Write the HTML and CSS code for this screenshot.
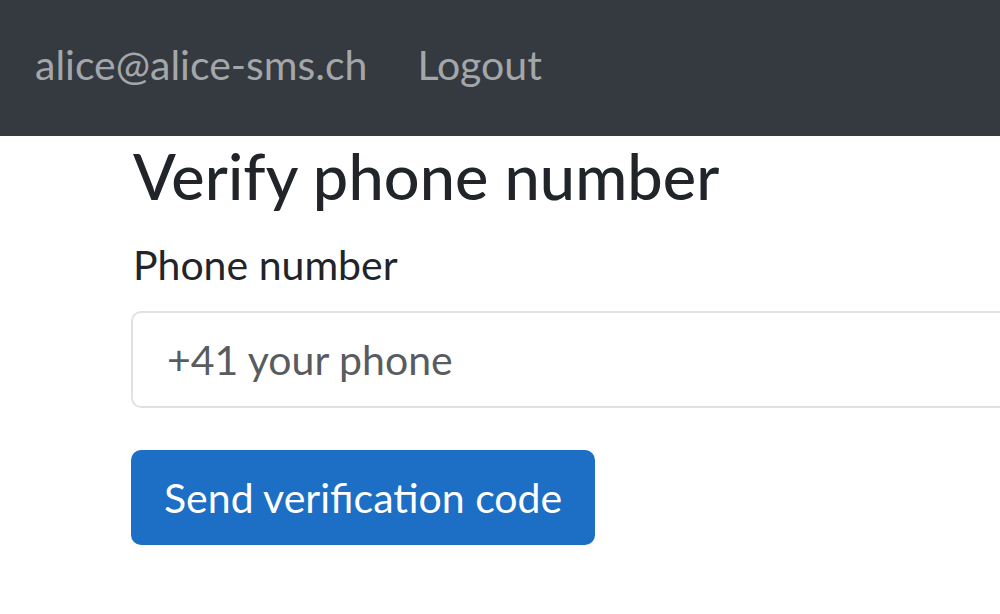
FILE: index.html
```html
<!DOCTYPE html>
<html lang="en">
<head>
<meta charset="utf-8">
<title>Verify phone number</title>
<link rel="stylesheet" href="styles.css">
</head>
<body>
<nav class="navbar">
  <a class="nav-link" href="#">alice@alice-sms.ch</a>
  <a class="nav-link" href="#">Logout</a>
</nav>
<main class="container">
  <h1 class="title">Verify phone number</h1>
  <form class="form">
    <label class="label" for="phone">Phone number</label>
    <input class="input" id="phone" type="text" placeholder="+41 your phone">
    <button class="btn" type="button">Send verification code</button>
  </form>
</main>
</body>
</html>
```

FILE: styles.css
```css
html, body {
  margin: 0;
  padding: 0;
  background: #ffffff;
  font-family: Lato, "Noto Sans", sans-serif;
  color: #212529;
}
.navbar {
  box-sizing: border-box;
  display: flex;
  align-items: center;
  height: 136px;
  background: #343a40;
  padding: 0 0 8px 10px;
}
.nav-link {
  color: #a4a7aa;
  text-decoration: none;
  font-size: 41px;
  padding: 0 25px;
  line-height: 1;
}
.container {
  padding-left: 131px;
}
.title {
  margin: 0;
  padding-top: 2px;
  padding-left: 2px;
  font-size: 63px;
  font-weight: 500;
  line-height: 1.2;
  letter-spacing: 0.1px;
}
.form {
  display: flex;
  flex-direction: column;
  align-items: flex-start;
}
.label {
  margin-top: 26px;
  padding-left: 2px;
  font-size: 41px;
  line-height: 1.2;
}
.input {
  box-sizing: border-box;
  margin-top: 22px;
  width: 900px;
  height: 97px;
  border: 2px solid #dee2e6;
  border-radius: 10px;
  padding: 0 34px;
  font-family: inherit;
  font-size: 41px;
  color: #212529;
  outline: none;
}
.input::placeholder {
  color: #595c5f;
}
.btn {
  margin-top: 42px;
  box-sizing: border-box;
  height: 95px;
  padding: 0 33px;
  background: #1d6ec5;
  color: #ffffff;
  border: none;
  border-radius: 10px;
  font-family: inherit;
  font-size: 41px;
  cursor: pointer;
}
```
